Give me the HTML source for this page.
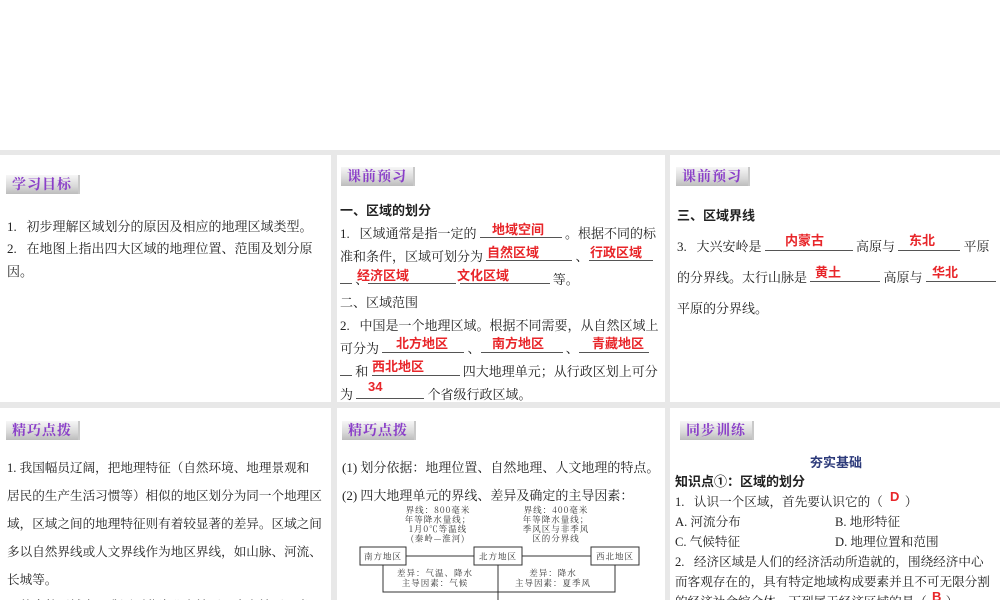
<!DOCTYPE html>
<html><head><meta charset="utf-8"><style>
*{margin:0;padding:0;box-sizing:border-box}
body{width:1000px;height:600px;overflow:hidden;background:#e8e8e8;position:relative;font-family:"Liberation Serif","Noto Serif CJK SC",serif;color:#222}
.top{position:absolute;left:0;top:0;width:1000px;height:150px;background:#fff}
.p{position:absolute;background:#fff;overflow:hidden}
.b{position:absolute;height:19px;padding:0 6px;font-size:14px;font-weight:bold;color:#8a3fc8;line-height:19px;background:linear-gradient(#f6f6f6,#d8d8d8 60%,#bcbcbc);border-right:2px solid #c9c9c9;letter-spacing:1px;font-family:"Noto Serif CJK SC",serif}
.t{position:absolute;font-size:13px;white-space:nowrap}
.s{font-size:12.6px}
.bd{font-weight:bold;font-family:"Noto Sans CJK SC",sans-serif}
.r{color:#e8262a;font-weight:bold;font-family:"Liberation Sans","Noto Sans CJK SC",sans-serif;font-size:13px;position:absolute}
.u{display:inline-block;border-bottom:1px solid #555;height:12px;vertical-align:baseline}
</style></head><body>
<div class="top"></div>

<div class="p" style="left:0;top:155px;width:331px;height:247px">
<div class="b" style="left:6px;top:20px">学习目标</div>
<div class="t" style="left:7px;top:61px">1.&nbsp;&nbsp; 初步理解区域划分的原因及相应的地理区域类型。</div>
<div class="t" style="left:7px;top:83px">2.&nbsp;&nbsp; 在地图上指出四大区域的地理位置、范围及划分原</div>
<div class="t" style="left:7px;top:106px">因。</div>
</div>

<div class="p" style="left:337px;top:155px;width:328px;height:247px">
<div class="b" style="left:4px;top:12px">课前预习</div>
<div class="t bd" style="left:3px;top:45px">一、区域的划分</div>
<div class="t" style="left:3px;top:68px">1.&nbsp;&nbsp; 区域通常是指一定的 <span class="u" style="width:82px"></span> 。根据不同的标</div>
<div class="t" style="left:3px;top:91px">准和条件，区域可划分为 <span class="u" style="width:86px"></span> 、<span class="u" style="width:64px"></span></div>
<div class="t" style="left:3px;top:114px"><span class="u" style="width:12px"></span> 、<span class="u" style="width:88px"></span> <span class="u" style="width:90px"></span> 等。</div>
<div class="t" style="left:3px;top:137px">二、区域范围</div>
<div class="t" style="left:3px;top:160px">2.&nbsp;&nbsp; 中国是一个地理区域。根据不同需要，从自然区域上</div>
<div class="t" style="left:3px;top:183px">可分为 <span class="u" style="width:82px"></span> 、<span class="u" style="width:82px"></span> 、<span class="u" style="width:70px"></span></div>
<div class="t" style="left:3px;top:206px"><span class="u" style="width:12px"></span> 和 <span class="u" style="width:88px"></span> 四大地理单元；从行政区划上可分</div>
<div class="t" style="left:3px;top:229px">为 <span class="u" style="width:68px"></span> 个省级行政区域。</div>
<span class="r" style="left:155px;top:64px">地域空间</span>
<span class="r" style="left:150px;top:87px">自然区域</span>
<span class="r" style="left:253px;top:87px">行政区域</span>
<span class="r" style="left:20px;top:110px">经济区域</span>
<span class="r" style="left:120px;top:110px">文化区域</span>
<span class="r" style="left:59px;top:178px">北方地区</span>
<span class="r" style="left:155px;top:178px">南方地区</span>
<span class="r" style="left:255px;top:178px">青藏地区</span>
<span class="r" style="left:35px;top:201px">西北地区</span>
<span class="r" style="left:31px;top:224px">34</span>
</div>

<div class="p" style="left:670px;top:155px;width:330px;height:247px">
<div class="b" style="left:6px;top:12px">课前预习</div>
<div class="t bd" style="left:7px;top:50px">三、区域界线</div>
<div class="t" style="left:7px;top:81px">3.&nbsp;&nbsp; 大兴安岭是 <span class="u" style="width:88px"></span> 高原与 <span class="u" style="width:62px"></span> 平原</div>
<div class="t" style="left:7px;top:112px">的分界线。太行山脉是 <span class="u" style="width:70px"></span> 高原与 <span class="u" style="width:70px"></span></div>
<div class="t" style="left:7px;top:143px">平原的分界线。</div>
<span class="r" style="left:115px;top:75px">内蒙古</span>
<span class="r" style="left:239px;top:75px">东北</span>
<span class="r" style="left:145px;top:107px">黄土</span>
<span class="r" style="left:262px;top:107px">华北</span>
</div>

<div class="p" style="left:0;top:408px;width:331px;height:192px">
<div class="b" style="left:6px;top:13px">精巧点拨</div>
<div class="t s" style="left:7px;top:49px">1. 我国幅员辽阔，把地理特征（自然环境、地理景观和</div>
<div class="t s" style="left:7px;top:77px">居民的生产生活习惯等）相似的地区划分为同一个地理区</div>
<div class="t s" style="left:7px;top:105px">域，区域之间的地理特征则有着较显著的差异。区域之间</div>
<div class="t s" style="left:7px;top:133px">多以自然界线或人文界线作为地区界线，如山脉、河流、</div>
<div class="t s" style="left:7px;top:161px">长城等。</div>
<div class="t s" style="left:7px;top:187px">2. 从自然区域上，我国可分为北方地区、南方地区、青</div>
</div>

<div class="p" style="left:337px;top:408px;width:328px;height:192px">
<div class="b" style="left:5px;top:13px">精巧点拨</div>
<div class="t" style="left:5px;top:49px">(1) 划分依据：地理位置、自然地理、人文地理的特点。</div>
<div class="t" style="left:5px;top:77px">(2) 四大地理单元的界线、差异及确定的主导因素：</div>
<svg style="position:absolute;left:0;top:0" width="328" height="192" font-family="Noto Serif CJK SC,serif" font-size="8.5" fill="#333" letter-spacing="1">
<g text-anchor="middle">
<text x="101" y="105">界线：800毫米</text><text x="101" y="114.5">年等降水量线；</text><text x="101" y="124">1月0℃等温线</text><text x="101" y="133.5">(秦岭—淮河)</text>
<text x="219" y="105">界线：400毫米</text><text x="219" y="114.5">年等降水量线；</text><text x="219" y="124">季风区与非季风</text><text x="219" y="133.5">区的分界线</text>
<text x="98" y="168">差异：气温、降水</text><text x="98" y="178">主导因素：气候</text>
<text x="216" y="168">差异：降水</text><text x="216" y="178">主导因素：夏季风</text>
<text x="46" y="151.5">南方地区</text><text x="161" y="151.5">北方地区</text><text x="278" y="151.5">西北地区</text>
</g>
<g fill="none" stroke="#333" stroke-width="1">
<rect x="23" y="139" width="46" height="18"/><rect x="137" y="139" width="48" height="18"/><rect x="254" y="139" width="48" height="18"/>
<line x1="69" y1="148" x2="137" y2="148"/><line x1="185" y1="148" x2="254" y2="148"/>
<polyline points="46,157 46,184 278,184 278,157"/><line x1="161" y1="157" x2="161" y2="192"/>
</g>
</svg>
</div>

<div class="p" style="left:670px;top:408px;width:330px;height:192px">
<div class="b" style="left:10px;top:13px">同步训练</div>
<div class="t bd" style="left:140px;top:44px;color:#2c3a7a">夯实基础</div>
<div class="t bd" style="left:5px;top:63px">知识点①：区域的划分</div>
<div class="t s" style="left:5px;top:83px">1.&nbsp;&nbsp; 认识一个区域，首先要认识它的（&nbsp;&nbsp;&nbsp;&nbsp;&nbsp;&nbsp; ）</div>
<span class="r" style="left:220px;top:81px">D</span>
<div class="t s" style="left:5px;top:103px">A. 河流分布</div><div class="t s" style="left:165px;top:103px">B. 地形特征</div>
<div class="t s" style="left:5px;top:123px">C. 气候特征</div><div class="t s" style="left:165px;top:123px">D. 地理位置和范围</div>
<div class="t s" style="left:5px;top:143px">2.&nbsp;&nbsp; 经济区域是人们的经济活动所造就的，围绕经济中心</div>
<div class="t s" style="left:5px;top:163px">而客观存在的，具有特定地域构成要素并且不可无限分割</div>
<div class="t s" style="left:5px;top:183px">的经济社会综合体。下列属于经济区域的是（&nbsp;&nbsp;&nbsp;&nbsp;&nbsp; ）</div>
<span class="r" style="left:262px;top:181px">B</span>
</div>
</body></html>
